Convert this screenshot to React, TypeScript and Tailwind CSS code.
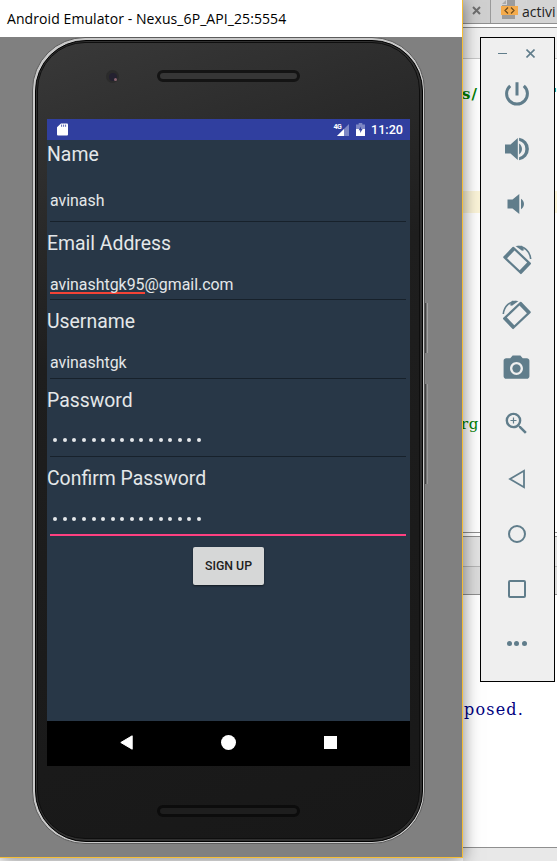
import { MdCameraAlt, MdZoomIn } from "react-icons/md";
import type { ReactNode } from "react";

function IdeBackground() {
  return (
    <div className="flex h-[861px] flex-col bg-white pl-[463px]">
      <div className="flex h-[24px] shrink-0 border-b border-[#8f8f8f] bg-[#d4d4d4]">
        <div className="flex w-[28px] items-center justify-center border-r border-[#9a9a9a] bg-[#cfcfcf] pb-[3px]">
          <svg className="h-[9px] w-[9px]" viewBox="0 0 9 9" stroke="#6e6e6e" strokeWidth="2">
            <path d="M1 1l7 7M8 1l-7 7" />
          </svg>
        </div>
        <div className="flex flex-1 pl-[10px]">
          <svg className="h-[20px] w-[17px] shrink-0" viewBox="0 0 17 20">
            <path d="M6 0h8v19H1V5h5z" fill="#9c9c9c" />
            <path d="M1 4l4-4v4z" fill="#aaa" />
            <rect y="6" width="17" height="9" fill="#f4ab4c" />
            <path d="M7 7.5L4 10.5l3 3M10 7.5l3 3-3 3" fill="none" stroke="#6b4b1c" strokeWidth="1.2" />
          </svg>
          <span className="ml-[4px] whitespace-nowrap font-['Open_Sans',sans-serif] text-[14px] leading-[23px] text-[#222]">activi</span>
        </div>
      </div>
      <div className="h-[3px] shrink-0 bg-white" />
      <div className="h-[32px] shrink-0 border-t border-b border-t-[#8f8f8f] border-b-[#c8c8c8] bg-[#f0f0f0]" />
      <div className="flex h-[132px] shrink-0 justify-between pt-[23px] font-['DejaVu_Serif',serif] text-[15px] font-bold leading-[24px] tracking-[1px] text-[#008000]">
        <span className="-ml-[1px]">s/</span>
        <span className="-mr-px">"</span>
      </div>
      <div className="h-[22px] shrink-0 bg-[#fcf5d9]" />
      <div className="h-[319px] shrink-0 pt-[199px] font-['DejaVu_Serif',serif] text-[15px] leading-[24px] tracking-[0.6px] text-[#008000]">
        <span className="-ml-[2px]">rg</span>
      </div>
      <div className="h-[5px] shrink-0 border-y border-[#8f8f8f] bg-white" />
      <div className="h-[30px] shrink-0 border-b border-[#b5b5b5] bg-[#e3e3e3]" />
      <div className="h-[28px] shrink-0 border-b border-[#8f8f8f] bg-[#dcdcdc]" />
      <div className="h-[252px] shrink-0 pl-px pt-[103px] font-['DejaVu_Serif',serif] text-[16px] leading-[24px] tracking-[1.2px] text-[#000080]">
        posed.
      </div>
      <div className="flex-1 border-t border-[#8f8f8f] bg-[#e8e8e8]" />
    </div>
  );
}

function StatusBar() {
  return (
    <div className="flex h-[21px] shrink-0 items-center bg-[#303f9f] pl-[10px] pr-[7px]">
      <svg className="h-[13px] w-[11px]" viewBox="0 0 11 13">
        <path d="M4 .4h6Q11 .4 11 1.4v10.2q0 1-1 1H1q-1 0-1-1V4.3z" fill="#fff" />
        <path d="M4.6 1.6v2.2M6.6 1.6v2.2M8.6 1.6v2.2" stroke="#303f9f" strokeWidth="0.8" />
      </svg>
      <div className="flex-1" />
      <svg className="h-[14px] w-[17px]" viewBox="0 0 17 14">
        <path d="M16 1v12H4z" fill="#7d87c4" />
        <path d="M11 6v7H4z" fill="#fff" />
        <path d="M0 0h9v6.8H0z" fill="#303f9f" />
        <text x="0.5" y="6" fontFamily="Roboto" fontSize="7" fontWeight="700" fill="#fff" letterSpacing="-0.5">4G</text>
      </svg>
      <svg className="ml-[6px] h-[13px] w-[9px]" viewBox="0 0 9 13">
        <path d="M2.7 0h3.6v1.4H9V6H0V1.4h2.7z" fill="#7d87c4" />
        <path d="M0 6h9v7H0z" fill="#fff" />
        <path d="M5 3.5L2.6 7.3h1.6v2.7l2.4-4H5z" fill="#303f9f" />
      </svg>
      <span className="ml-[6px] w-[32px] text-[12.6px] font-medium leading-[21px] text-white">11:20</span>
    </div>
  );
}

function Field({ label, children, size, input, line }: { label: string; children: ReactNode; size: string; input: string; line: string }) {
  return (
    <div className={`flex shrink-0 flex-col ${size}`}>
      <div className="h-[27px] whitespace-nowrap text-[19.4px] leading-[29px] text-[#e4e7e9]">{label}</div>
      <div className={`ml-[3px] mr-[4px] flex text-[15.9px] leading-[20px] text-[#e4e7e9] ${input} ${line}`}>{children}</div>
    </div>
  );
}

function PasswordDots() {
  return (
    <div className="flex h-[20px] items-center gap-[5.58px] pl-[3.2px] pt-[3px]">
      {Array.from({ length: 16 }, (_, i) => (
        <span key={i} className="h-[4px] w-[4px] rounded-full bg-[#e4e7e9]" />
      ))}
    </div>
  );
}

function Screen() {
  const thin = "border-b-[1.5px] border-[#17212b]";
  return (
    <div className="mx-auto flex h-[647px] w-[363px] shrink-0 flex-col bg-[#283747] font-['Roboto',sans-serif]">
      <StatusBar />
      <div className="flex flex-1 flex-col">
        <Field label="Name" size="h-[88.5px]" input="h-[55px] pt-[24px]" line={thin}>avinash</Field>
        <Field label="Email Address" size="h-[78.5px]" input="h-[44.5px] pt-[19px]" line={thin}>
          <span className="h-[19px] border-b-2 border-[#f44336]">avinashtgk95</span>@gmail.com
        </Field>
        <Field label="Username" size="h-[78.5px]" input="h-[44.5px] pt-[19px]" line={thin}>avinashtgk</Field>
        <Field label="Password" size="h-[78.5px]" input="h-[44.5px] pt-[16px]" line={thin}><PasswordDots /></Field>
        <Field label="Confirm Password" size="h-[83px]" input="h-[45px] pt-[16px]" line="border-b-2 border-[#ff4081]"><PasswordDots /></Field>
        <button className="mx-auto h-[38px] w-[71px] rounded-[2px] bg-[#d6d7d7] text-[12.3px] font-medium text-[#212121] shadow-[0_1px_2px_rgba(0,0,0,0.5)]">SIGN UP</button>
      </div>
      <div className="flex h-[45px] shrink-0 items-center justify-between bg-black pb-[2px] pl-[73px] pr-[73px]">
        <svg className="h-[15px] w-[13px]" viewBox="0 0 13 15"><path d="M12.2.8v13.4L.8 7.5z" fill="#fff" stroke="#fff" strokeWidth="1" strokeLinejoin="round" /></svg>
        <div className="h-[14.5px] w-[14.5px] rounded-full bg-white" />
        <div className="h-[13px] w-[13px] bg-white" />
      </div>
    </div>
  );
}

function Speaker({ tone }: { tone: string }) {
  return (
    <div className={`mx-auto h-[12px] w-[143px] shrink-0 rounded-full border-[3px] ${tone}`} />
  );
}

function Phone() {
  return (
    <div className="ml-[32px] h-[807px] w-[393px] rounded-[53px] border border-[#5c5c5c] bg-[#c9c9c9] p-[1.5px]">
      <div className="h-full rounded-[51px] border-[1.5px] border-black bg-[#303030] p-[1.5px]">
        <div className="flex h-full flex-col rounded-[48px] border border-[#0e0e0e] bg-linear-160 from-[#393939] via-[#1e1e1e] via-35% to-[#181818]">
          <div className="relative flex h-[76px] shrink-0 flex-col pt-[27px]">
            <Speaker tone="border-[#141414] bg-[#363636]" />
            <div className="absolute left-[68px] top-[27px] flex h-[13px] w-[13px] items-center justify-center rounded-full bg-[#2b2b2b]">
              <div className="flex h-[8px] w-[8px] items-end justify-end rounded-full bg-[#242130]">
                <div className="h-[2.5px] w-[2.5px] rounded-full bg-[#8a6570]" />
              </div>
            </div>
          </div>
          <Screen />
          <div className="pt-[39px]"><Speaker tone="border-[#0c0c0c] bg-[#1e1e1e]" /></div>
        </div>
      </div>
    </div>
  );
}

function EmulatorWindow() {
  return (
    <div className="absolute left-0 top-0 flex h-[858px] w-[463px] flex-col border-b border-r border-[#f4bd35] bg-[#808080] shadow-[0_2px_16px_rgba(0,0,0,0.5)]">
      <div className="h-[37px] shrink-0 bg-white pl-[7px] font-['Open_Sans',sans-serif] text-[14px] leading-[37px] tracking-[0.08px] text-black">
        <span className="whitespace-nowrap">Android Emulator - Nexus_6P_API_25:5554</span>
      </div>
      <Phone />
      <div className="absolute left-[425px] top-[303px] h-[50px] w-[3px] border-l border-r border-l-[#444] border-r-[#a0a0a0] bg-[#757575]" />
      <div className="absolute left-[425px] top-[384px] h-[100px] w-[3px] border-l border-r border-l-[#444] border-r-[#989898] bg-[#757575]" />
    </div>
  );
}

function RotateIcon({ mirrored }: { mirrored?: boolean }) {
  return (
    <svg className={mirrored ? "h-[30px] w-[30px] -scale-x-100" : "h-[30px] w-[30px]"} viewBox="0 0 30 30">
      <path transform="translate(15.1 15.4) rotate(43.5)" fillRule="evenodd" fill="#607d8b" d="M-11.5-7.6h23q1 0 1 1V6.6q0 1-1 1h-23q-1 0-1-1V-6.6q0-1 1-1zM-8.7-5.4V5.4H8.7V-5.4z" />
      <path d="M15.5 1.5C22 1 28 6 28.7 14" fill="none" stroke="#607d8b" strokeWidth="1.6" />
      <path d="M13.5.9l6.5-.1 2 4.5-2 .5z" fill="#607d8b" />
    </svg>
  );
}

function VolumeIcon({ loud }: { loud?: boolean }) {
  return loud ? (
    <svg className="h-[24px] w-[24px]" viewBox="0 0 24 24" fill="#607d8b">
      <path d="M0 7.5h5.5L12.8.9v22.2l-7.3-6.6H0zM14.1 6.6a6.5 6.5 0 0 1 0 10.8zM14.1.8a11.3 11.3 0 0 1 0 22.4v-3a8.5 8.5 0 0 0 0-16.4z" />
    </svg>
  ) : (
    <svg className="h-[24px] w-[24px]" viewBox="0 0 24 24" fill="#607d8b">
      <path d="M2.5 7.5h5L14.3 2v20l-6.8-5.5h-5zM16 6.7a6.2 6.2 0 0 1 0 10.6z" />
    </svg>
  );
}

function ToolSlot({ children }: { children: ReactNode }) {
  return <div className="flex h-[55px] shrink-0 items-center justify-center text-[#607d8b]">{children}</div>;
}

function Toolbar() {
  return (
    <div className="absolute left-[480px] top-[37px] flex h-[645px] w-[75px] flex-col border border-black bg-[#efefef] pr-[2px]">
      <div className="flex h-[28px] shrink-0 items-center gap-[19px] pl-[17px] pt-[3px]">
        <div className="h-px w-[9px] bg-[#607d8b]" />
        <svg className="h-[9px] w-[9px]" viewBox="0 0 9 9" stroke="#607d8b" strokeWidth="1.6"><path d="M.5.5l8 8M8.5.5l-8 8" /></svg>
      </div>
      <ToolSlot>
        <svg className="h-[26px] w-[26px]" viewBox="0 0 26 26" fill="none" stroke="currentColor" strokeWidth="3">
          <path d="M13 1.2v13.3M6.2 4.8a10.4 10.4 0 1 0 13.6 0" />
        </svg>
      </ToolSlot>
      <ToolSlot><VolumeIcon loud /></ToolSlot>
      <ToolSlot><VolumeIcon /></ToolSlot>
      <ToolSlot><div className="pt-[2px]"><RotateIcon /></div></ToolSlot>
      <ToolSlot><div className="pt-[2px]"><RotateIcon mirrored /></div></ToolSlot>
      <ToolSlot><MdCameraAlt size={31} /></ToolSlot>
      <ToolSlot><MdZoomIn size={29} /></ToolSlot>
      <ToolSlot>
        <svg className="h-[20px] w-[18px]" viewBox="0 0 18 20" fill="none" stroke="currentColor" strokeWidth="1.8"><path d="M16 1.8v16.4L2 10z" /></svg>
      </ToolSlot>
      <ToolSlot><div className="h-[18px] w-[18px] rounded-full border-2 border-[#607d8b]" /></ToolSlot>
      <ToolSlot><div className="h-[18px] w-[18px] rounded-[2px] border-2 border-[#607d8b]" /></ToolSlot>
      <ToolSlot>
        <div className="flex gap-[2.5px]">
          <span className="h-[5px] w-[5px] rounded-full bg-[#607d8b]" />
          <span className="h-[5px] w-[5px] rounded-full bg-[#607d8b]" />
          <span className="h-[5px] w-[5px] rounded-full bg-[#607d8b]" />
        </div>
      </ToolSlot>
    </div>
  );
}

export default function App() {
  return (
    <div className="relative h-[861px] w-[557px] overflow-hidden">
      <IdeBackground />
      <EmulatorWindow />
      <Toolbar />
    </div>
  );
}
